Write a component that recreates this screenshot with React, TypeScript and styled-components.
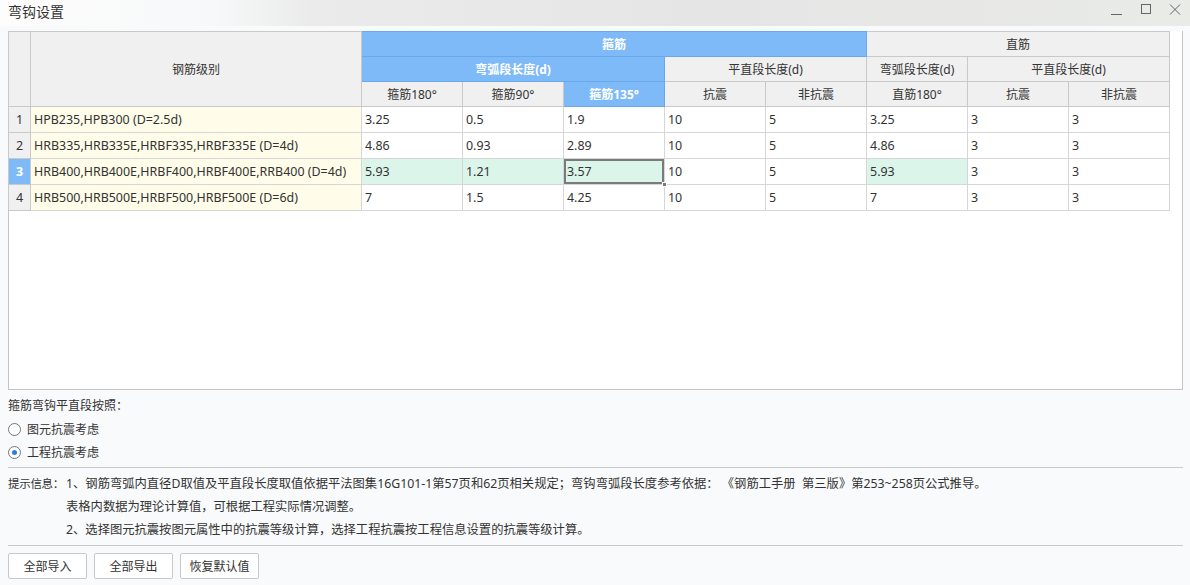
import * as React from 'react';
import styled, {createGlobalStyle, css} from 'styled-components';

const FONT = `"Segoe UI", "Noto Sans", "Noto Sans CJK SC", sans-serif`;

interface Row {
  name: string;
  values: string[];
}

const ROWS: Row[] = [
  {name: 'HPB235,HPB300 (D=2.5d)', values: ['3.25', '0.5', '1.9', '10', '5', '3.25', '3', '3']},
  {name: 'HRB335,HRB335E,HRBF335,HRBF335E (D=4d)', values: ['4.86', '0.93', '2.89', '10', '5', '4.86', '3', '3']},
  {name: 'HRB400,HRB400E,HRBF400,HRBF400E,RRB400 (D=4d)', values: ['5.93', '1.21', '3.57', '10', '5', '5.93', '3', '3']},
  {name: 'HRB500,HRB500E,HRBF500,HRBF500E (D=6d)', values: ['7', '1.5', '4.25', '10', '5', '7', '3', '3']},
];

const SELECTED_ROW = 2;
const SELECTED_COL = 2;
// columns shaded green on the selected row
const GREEN_COLS = [0, 1, 2, 5];

const GlobalStyle = createGlobalStyle`
  html, body {
    margin: 0;
    padding: 0;
    background: #f9fafb;
  }
  body {
    font-family: ${FONT};
    font-size: 12px;
    color: #333;
  }
`;

export default function App(): JSX.Element {
  return (
    <Dialog>
      <GlobalStyle />
      <TitleBar>
        <Title>弯钩设置</Title>
        <WindowButtons>
          <WinButton aria-label="minimize">
            <svg width="14" height="14" viewBox="0 0 14 14">
              <path d="M1 11.5h11" stroke="#666" strokeWidth="1" />
            </svg>
          </WinButton>
          <WinButton aria-label="maximize">
            <svg width="14" height="14" viewBox="0 0 14 14">
              <rect x="2.5" y="1.5" width="9" height="9" fill="none" stroke="#666" strokeWidth="1" />
            </svg>
          </WinButton>
          <WinButton aria-label="close">
            <svg width="14" height="14" viewBox="0 0 14 14">
              <path d="M2 1.5l10 10M12 1.5l-10 10" stroke="#666" strokeWidth="1" />
            </svg>
          </WinButton>
        </WindowButtons>
      </TitleBar>

      <Body>
        <TableBox>
          <Grid>
            <colgroup>
              <col style={{width: 22}} />
              <col style={{width: 331}} />
              <col style={{width: 101}} />
              <col style={{width: 101}} />
              <col style={{width: 101}} />
              <col style={{width: 101}} />
              <col style={{width: 101}} />
              <col style={{width: 101}} />
              <col style={{width: 101}} />
              <col style={{width: 101}} />
            </colgroup>
            <thead>
              <tr>
                <HeadCell rowSpan={3} />
                <HeadCell rowSpan={3}>钢筋级别</HeadCell>
                <HeadCell colSpan={5} $blue>箍筋</HeadCell>
                <HeadCell colSpan={3}>直筋</HeadCell>
              </tr>
              <tr>
                <HeadCell colSpan={3} $blue>弯弧段长度(d)</HeadCell>
                <HeadCell colSpan={2}>平直段长度(d)</HeadCell>
                <HeadCell>弯弧段长度(d)</HeadCell>
                <HeadCell colSpan={2}>平直段长度(d)</HeadCell>
              </tr>
              <tr>
                <HeadCell>箍筋180°</HeadCell>
                <HeadCell>箍筋90°</HeadCell>
                <HeadCell $blue>箍筋135°</HeadCell>
                <HeadCell>抗震</HeadCell>
                <HeadCell>非抗震</HeadCell>
                <HeadCell>直筋180°</HeadCell>
                <HeadCell>抗震</HeadCell>
                <HeadCell>非抗震</HeadCell>
              </tr>
            </thead>
            <tbody>
              {ROWS.map((row, r) => (
                <tr key={row.name}>
                  <RowNum $active={r === SELECTED_ROW}>{r + 1}</RowNum>
                  <NameCell>{row.name}</NameCell>
                  {row.values.map((v, c) => (
                    <Cell
                      key={c}
                      $green={r === SELECTED_ROW && GREEN_COLS.includes(c)}
                      $focus={r === SELECTED_ROW && c === SELECTED_COL}
                    >
                      {v}
                      {r === SELECTED_ROW && c === SELECTED_COL && <FillHandle />}
                    </Cell>
                  ))}
                </tr>
              ))}
            </tbody>
          </Grid>
        </TableBox>

        <OptionGroup>
          <Label>箍筋弯钩平直段按照：</Label>
          <RadioRow>
            <Radio />
            <span>图元抗震考虑</span>
          </RadioRow>
          <RadioRow>
            <Radio $checked />
            <span>工程抗震考虑</span>
          </RadioRow>
        </OptionGroup>

        <Tips>
          <TipLabel>提示信息：</TipLabel>
          <TipLines>
            <TipLine>
              1、钢筋弯弧内直径D取值及平直段长度取值依据平法图集16G101-1第57页和62页相关规定；弯钩弯弧段长度参考依据：&nbsp;《钢筋工手册&nbsp;&nbsp;第三版》第253~258页公式推导。
            </TipLine>
            <TipLine>表格内数据为理论计算值，可根据工程实际情况调整。</TipLine>
            <TipLine>2、选择图元抗震按图元属性中的抗震等级计算，选择工程抗震按工程信息设置的抗震等级计算。</TipLine>
          </TipLines>
        </Tips>

        <Footer>
          <Button>全部导入</Button>
          <Button>全部导出</Button>
          <Button>恢复默认值</Button>
        </Footer>
      </Body>
    </Dialog>
  );
}

const Dialog = styled.div`
  width: 1190px;
  height: 585px;
  display: flex;
  flex-direction: column;
  overflow: hidden;
  background: #f9fafb;
`;

const TitleBar = styled.div`
  height: 26px;
  flex-shrink: 0;
  display: flex;
  align-items: center;
  justify-content: space-between;
  padding: 0 8px;
  background: linear-gradient(90deg, #fdfdfd 0%, #f7f8f9 18%, #ebebeb 26%, #e5e5e5 60%, #e9ebe7 100%);
`;

const Title = styled.div`
  font-size: 14px;
  color: #333;
  margin-top: -4px;
`;

const WindowButtons = styled.div`
  display: flex;
  align-items: center;
  gap: 13px;
  margin-top: -6px;
  margin-right: -1px;
`;

const WinButton = styled.div`
  width: 16px;
  height: 16px;
  display: flex;
  align-items: center;
  justify-content: center;
`;

const Body = styled.div`
  flex: 1;
  display: flex;
  flex-direction: column;
  padding: 5px 7px 0 8px;
`;

const TableBox = styled.div`
  height: 359px;
  flex-shrink: 0;
  border: 1px solid #c4c4c4;
  border-top: none;
  background: #fff;
  box-sizing: border-box;
`;

const Grid = styled.table`
  border-collapse: collapse;
  table-layout: fixed;
  width: 1161px;
  margin-left: -1px;
  font-size: 12px;
`;

const HeadCell = styled.th<{$blue?: boolean}>`
  height: 24px;
  padding: 0;
  border: 1px solid #c9c9c9;
  background: #f0f0f0;
  color: #333;
  font-weight: normal;
  text-align: center;
  ${(p) =>
    p.$blue &&
    css`
      background: #7fbaf8;
      border-color: #69a8ec;
      color: #fff;
      font-weight: bold;
    `}
`;

const RowNum = styled.td<{$active?: boolean}>`
  height: 25px;
  padding: 0;
  border: 1px solid #c9c9c9;
  background: #f0f0f0;
  text-align: center;
  color: #333;
  font-size: 12.5px;
  ${(p) =>
    p.$active &&
    css`
      background: #7fbaf8;
      color: #fff;
      font-weight: bold;
    `}
`;

const NameCell = styled.td`
  padding: 0 3px;
  border: 1px solid #d6d6d6;
  background: #fffde9;
  white-space: nowrap;
  overflow: hidden;
  font-size: 12.45px;
`;

const Cell = styled.td<{$green?: boolean; $focus?: boolean}>`
  position: relative;
  padding: 0 3px;
  border: 1px solid #d6d6d6;
  background: ${(p) => (p.$green ? '#dcf5ea' : '#fff')};
  white-space: nowrap;
  font-size: 12.45px;
  ${(p) =>
    p.$focus &&
    css`
      box-shadow: inset 0 0 0 2px #7a7a7a;
    `}
`;

const FillHandle = styled.span`
  position: absolute;
  right: -3px;
  bottom: -3px;
  width: 5px;
  height: 5px;
  background: #7a7a7a;
  border: 1px solid #fff;
  box-sizing: border-box;
  z-index: 1;
`;

const OptionGroup = styled.div`
  display: flex;
  flex-direction: column;
  gap: 5px;
  padding-top: 7px;
  padding-bottom: 6px;
`;

const Label = styled.div`
  height: 18px;
  line-height: 18px;
`;

const RadioRow = styled.div`
  display: flex;
  align-items: center;
  gap: 6px;
  height: 18px;
`;

const Radio = styled.span<{$checked?: boolean}>`
  width: 13px;
  height: 13px;
  border-radius: 50%;
  border: 1px solid #777;
  background: #fff;
  box-sizing: border-box;
  display: flex;
  align-items: center;
  justify-content: center;
  &::after {
    content: '';
    width: 5px;
    height: 5px;
    border-radius: 50%;
    background: ${(p) => (p.$checked ? '#2a7de1' : 'transparent')};
  }
`;

const Tips = styled.div`
  display: flex;
  border-top: 1px solid #c9c9c9;
  border-bottom: 1px solid #c9c9c9;
  padding: 4px 0 4px;
`;

const TipLabel = styled.div`
  width: 58px;
  flex-shrink: 0;
  line-height: 23px;
  white-space: nowrap;
  font-size: 11.5px;
  letter-spacing: -0.3px;
`;

const TipLines = styled.div`
  display: flex;
  flex-direction: column;
  font-size: 12.3px;
`;

const TipLine = styled.div`
  line-height: 23px;
  height: 23px;
  white-space: nowrap;
`;

const Footer = styled.div`
  display: flex;
  gap: 7px;
  padding-top: 7px;
`;

const Button = styled.div`
  width: 79px;
  height: 26px;
  display: flex;
  align-items: center;
  justify-content: center;
  border: 1px solid #c9c9c9;
  border-radius: 2px;
  background: #fff;
  box-sizing: border-box;
  color: #333;
`;
